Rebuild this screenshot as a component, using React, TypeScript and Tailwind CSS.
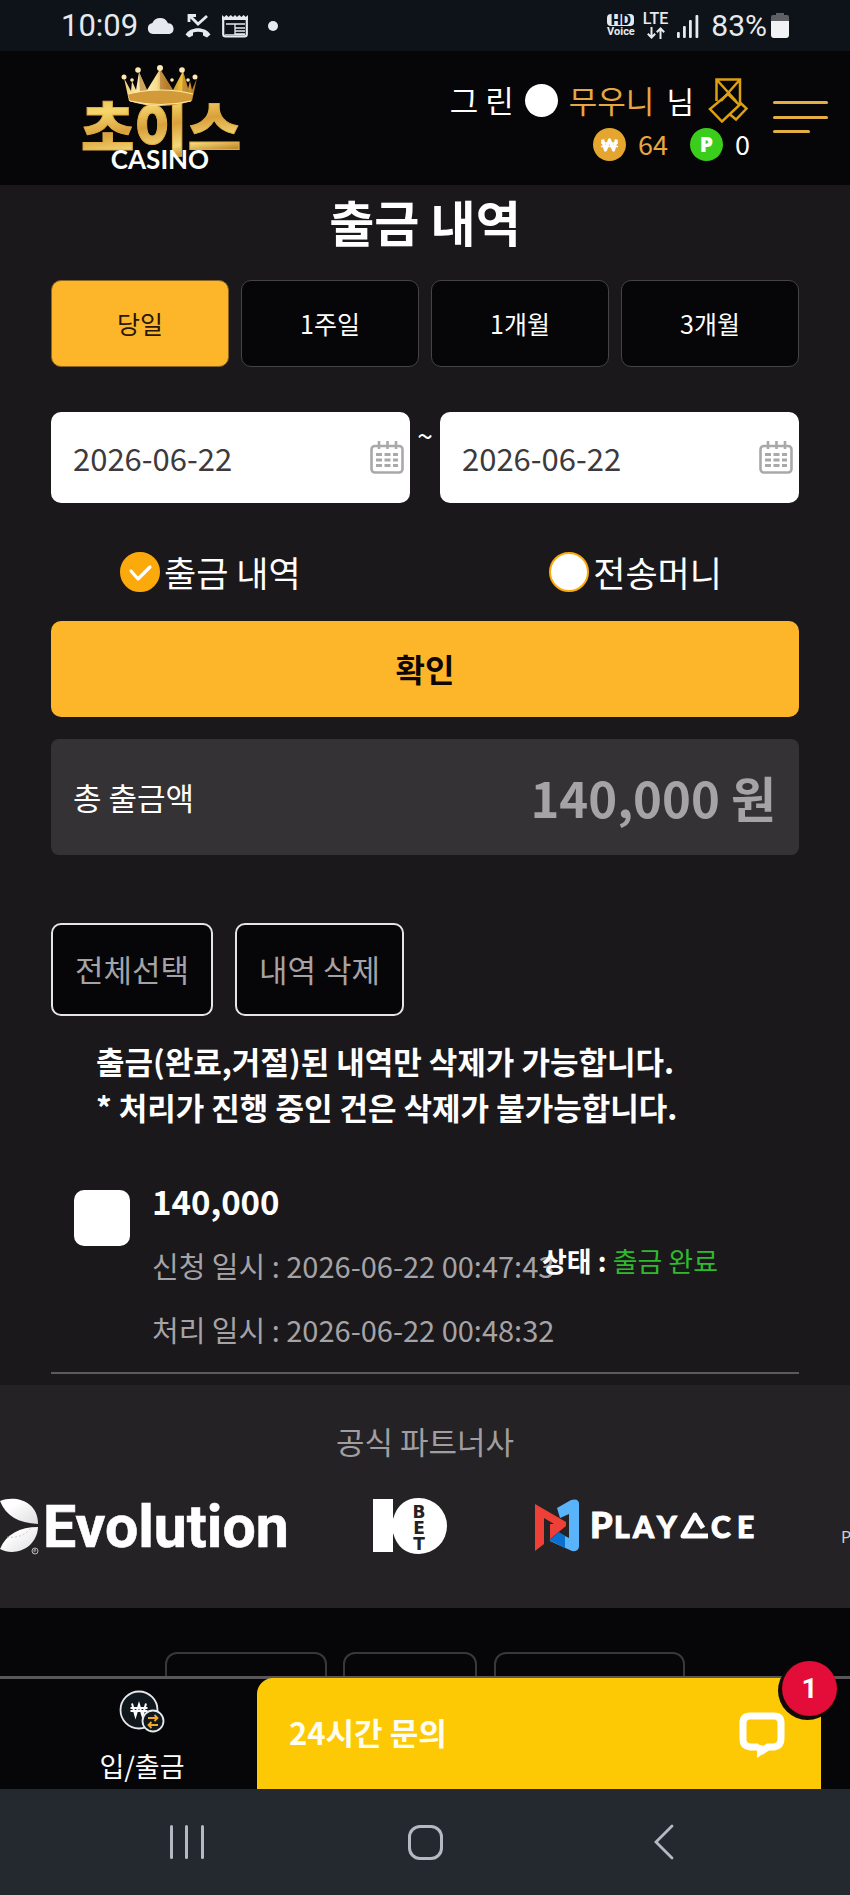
import { useState } from "react";

const PERIODS = ["당일", "1주일", "1개월", "3개월"];

function StatusBar() {
  return (
    <div className="flex h-[51px] items-center justify-between bg-[#0d1319] pr-[61px] pl-[61px] font-[Roboto,sans-serif] text-[#e6eaee]">
      <div className="flex items-center">
        <span className="text-[31px] leading-[50px]">10:09</span>
        <svg className="ml-[9px] h-4 w-7" viewBox="0 0 28 16" fill="currentColor" aria-hidden="true">
          <path d="M6 16a5.500 5.500 0 0 1-.6-10.900A8.500 8.500 0 0 1 21 5.200 5.500 5.500 0 0 1 22.500 16Z" />
        </svg>
        <svg className="ml-[10px] h-6 w-[26px]" viewBox="0 0 26 24" fill="none" stroke="currentColor" aria-hidden="true">
          <path d="M22 2 13 10 5 2M4 8V1.500h7" strokeWidth="2.800" />
          <path d="M.5 20.500C5.500 12 20.500 12 25.500 20.500L22 23.500 18 21.500V18.500C15 17.500 11 17.500 8 18.500V21.500L4 23.500Z" fill="currentColor" stroke="none" />
        </svg>
        <svg className="ml-[11px] h-6 w-[26px]" viewBox="0 0 26 24" fill="none" stroke="currentColor" aria-hidden="true">
          <path d="M0 1 2.200 3 4.400 1 6.600 3 8.800 1 11 3 13 1 15 3 17.200 1 19.400 3 21.600 1 23.800 3 26 1V6H0Z" fill="currentColor" stroke="none" />
          <path d="M1.200 4V20Q1.200 22.500 3.500 22.500H22.500Q24.800 22.500 24.800 20V4" strokeWidth="2.200" />
          <path d="M4 10H23M13 14H23M13 17H23M13 20H23M13 10V21M3 20.800H23" strokeWidth="1.300" />
        </svg>
        <span className="ml-5 size-[10px] rounded-full bg-current" />
      </div>
      <div className="flex items-center">
        <div className="flex flex-col items-center">
          <span className="w-[27px] rounded-[4px] bg-[#e6eaee] text-center text-[15px] leading-3 font-black text-[#0d1319]">HD</span>
          <span className="text-[11px] leading-3 font-bold">Voice</span>
        </div>
        <div className="ml-2 flex flex-col items-center">
          <span className="text-[16px] leading-3 font-medium">LTE</span>
          <svg className="mt-[2px] h-3 w-[18px]" viewBox="0 0 18 12" fill="none" stroke="currentColor" strokeWidth="2" aria-hidden="true">
            <path d="M4.500 0V10.500M.8 6.800 4.500 10.500 8.200 6.800M13.500 12V1.500M9.800 5.200 13.500 1.500 17.200 5.200" />
          </svg>
        </div>
        <svg className="ml-[9px] h-6 w-[22px]" viewBox="0 0 22 24" fill="currentColor" aria-hidden="true">
          <rect x="0" y="18" width="2.800" height="6" rx="1" />
          <rect x="6" y="12" width="2.800" height="12" rx="1" />
          <rect x="12" y="6" width="2.800" height="18" rx="1" />
          <rect x="18.500" y="1" width="2.800" height="23" rx="1" />
        </svg>
        <span className="ml-3 text-[30px] leading-[50px]">83%</span>
        <svg className="ml-1 h-[25px] w-[18px]" viewBox="0 0 18 25" aria-hidden="true">
          <path d="M5 0h8v2h3q2 0 2 2v5H0V4q0-2 2-2h3Z" fill="#5d6165" />
          <path d="M0 8H18V22q0 3-3 3H3q-3 0-3-3Z" fill="#f0f2f4" />
        </svg>
      </div>
    </div>
  );
}

function Logo() {
  return (
    <a href="#home" aria-label="초이스 CASINO">
      <svg className="h-[116px] w-[164px]" viewBox="0 0 164 116" aria-hidden="true">
        <defs>
          <linearGradient id="gold" x1="0" y1="0" x2="0.3" y2="1">
            <stop offset="0" stopColor="#e2a83a" />
            <stop offset="0.35" stopColor="#f6d76c" />
            <stop offset="0.6" stopColor="#d9a03a" />
            <stop offset="0.85" stopColor="#f4d978" />
            <stop offset="1" stopColor="#b97e22" />
          </linearGradient>
          <linearGradient id="crown" x1="0" y1="0" x2="1" y2="0">
            <stop offset="0" stopColor="#f0cf78" />
            <stop offset="0.25" stopColor="#fff0b8" />
            <stop offset="0.45" stopColor="#f7dc8d" />
            <stop offset="0.6" stopColor="#b57a2a" />
            <stop offset="0.8" stopColor="#f3c63e" />
            <stop offset="1" stopColor="#a8671d" />
          </linearGradient>
        </defs>
        <g fontFamily="'Noto Sans CJK KR', sans-serif" fontWeight="900" fontSize="58">
          <text x="82" y="86" textAnchor="middle" fill="url(#gold)" stroke="#e0ac44" strokeWidth="1">초이스</text>
        </g>
        <path d="M50 37 45 14 52 27 53 17 57 26 60 8 68 26 81 5 94 26 104 7 109 25 111 17 113 26 118 14 113 37Q81 47 50 37Z" fill="url(#crown)" />
        <path d="M81 5 94 26 91 36 81 30ZM104 7 110 27 107 35 103 28ZM60 8 68 26 66 34 61 28Z" fill="#b47a2b" opacity="0.65" />
        <path d="M49 30Q82 22 114 30L112 37Q82 45 51 37Z" fill="#d39a3a" />
        <path d="M49 30Q82 22 114 30M51 37Q82 44 112 37" fill="none" stroke="#ffe9a6" strokeWidth="1.200" />
        <g fill="#ffe8b4">
          <circle cx="45" cy="13" r="2.500" />
          <circle cx="53" cy="16" r="1.800" />
          <circle cx="59" cy="6" r="2.800" />
          <circle cx="81" cy="4" r="3" />
          <circle cx="103" cy="6" r="2.800" />
          <circle cx="93" cy="16" r="1.800" />
          <circle cx="109" cy="16" r="1.800" />
          <circle cx="116" cy="13" r="2.500" />
        </g>
        <text x="81" y="105" textAnchor="middle" fill="#fff" fontFamily="Lato, sans-serif" fontWeight="700" fontSize="26">CASINO</text>
      </svg>
    </a>
  );
}

function Header() {
  return (
    <header className="flex h-[134px] justify-between bg-[#060508] pr-[22px] pl-[79px]">
      <div className="pt-[13px]">
        <Logo />
      </div>
      <div className="flex">
        <div className="flex flex-col items-end pt-[27px] text-[30px] leading-[44px] text-white">
          <div className="flex h-11 items-center pr-[2px]">
            <span className="text-[31px]">그 린</span>
            <span className="ml-[11px] size-[33px] rounded-full bg-white" />
            <span className="ml-[11px] text-[31px] text-[#e5a742]">무우니</span>
            <span className="ml-3">님</span>
            <svg className="ml-[14px] h-[46px] w-10" viewBox="0 0 40 46" fill="none" stroke="#dca010" strokeWidth="2.500" aria-hidden="true">
              <path d="M8.500 24V2.500H32V25M8.500 2.500 28 24M32 2.500 13 24" />
              <path d="M20 17 31.500 28 14 44.500 2 32ZM31.500 25 38.500 31.500 28 42.500 21.500 37" />
            </svg>
          </div>
          <div className="flex h-11 items-center text-[27px]">
            <svg className="size-[33px]" viewBox="0 0 33 33" role="img" aria-label="원">
              <circle cx="16.500" cy="16.500" r="16.500" fill="#e5a62f" />
              <path d="M9.500 11.500 12.500 22 16.500 12 20.500 22 23.500 11.500" fill="none" stroke="#fff" strokeWidth="3.200" strokeLinejoin="round" />
              <path d="M8 15H25M8 18.500H25" stroke="#fff" strokeWidth="1.600" />
            </svg>
            <span className="ml-3 text-[#e5a742]">64</span>
            <span className="ml-[22px] flex size-[33px] items-center justify-center rounded-full bg-[#3bcd1c] font-['Noto_Sans',sans-serif] text-[21px] leading-none font-black">P</span>
            <span className="ml-3">0</span>
          </div>
        </div>
        <button type="button" aria-label="메뉴" className="mt-[50px] ml-[23px] flex h-8 flex-col justify-between self-start">
          <span className="h-[3px] w-[55px] rounded-full bg-[#e5ae43]" />
          <span className="h-[3px] w-[55px] rounded-full bg-[#e5ae43]" />
          <span className="h-[3px] w-[37px] rounded-full bg-[#e5ae43]" />
        </button>
      </div>
    </header>
  );
}

function DateField({ label }: { label: string }) {
  const [value, setValue] = useState("2026-06-22");
  return (
    <div className="flex h-[91px] min-w-0 flex-1 items-center rounded-[10px] bg-white pr-[6px] pl-[22px]">
      <input
        type="text"
        aria-label={label}
        value={value}
        onChange={(e) => setValue(e.target.value)}
        className="h-[60px] min-w-0 flex-1 bg-transparent text-[31px] leading-[60px] text-[#3c3a3d] outline-none"
      />
      <button type="button" aria-label="달력 열기" className="pb-[2px]">
        <svg className="h-[34px] w-[34px]" viewBox="0 0 34 34" fill="none" stroke="#aaa8aa" aria-hidden="true">
          <rect x="1.500" y="6" width="31" height="26.500" rx="3.500" strokeWidth="2.600" />
          <path d="M9 1V9M17.500 1V9M26 1V9" strokeWidth="2.600" />
          <path d="M6 14.500H28M6 20H28M6 25.500H28" strokeWidth="2.800" strokeDasharray="6 2.500" />
        </svg>
      </button>
    </div>
  );
}

function KindRadio({ id, label, checked, onSelect }: { id: string; label: string; checked: boolean; onSelect: () => void }) {
  return (
    <label htmlFor={id} className="flex h-10 items-center gap-1 text-[35px] leading-10 text-white">
      <span className="relative flex">
        <input
          id={id}
          type="radio"
          name="kind"
          checked={checked}
          onChange={onSelect}
          className="size-10 appearance-none rounded-full border-2 border-[#fca90b] bg-white checked:bg-[#fca90b]"
        />
        {checked && (
          <svg className="pointer-events-none absolute inset-0 size-10" viewBox="0 0 40 40" fill="none" stroke="#fff" strokeWidth="3.200" strokeLinecap="round" strokeLinejoin="round" aria-hidden="true">
            <path d="M11 19 18 27 30 15" />
          </svg>
        )}
      </span>
      {label}
    </label>
  );
}

function WithdrawHistory() {
  const [period, setPeriod] = useState("당일");
  const [kind, setKind] = useState("withdraw");
  const [picked, setPicked] = useState(false);
  return (
    <main className="px-[51px] pb-[11px]">
      <h1 className="text-center text-[49px] leading-[72px] font-bold text-white">출금 내역</h1>
      <div className="mt-[23px] grid grid-cols-4 gap-3">
        {PERIODS.map((p) => (
          <button
            key={p}
            type="button"
            onClick={() => setPeriod(p)}
            className={
              p === period
                ? "h-[87px] rounded-[10px] border border-[#8a6420] bg-[#fdb629] text-[25px] text-[#2a1608]"
                : "h-[87px] rounded-[10px] border border-[#454346] bg-[#060508] text-[25px] text-white"
            }
          >
            {p}
          </button>
        ))}
      </div>
      <div className="mt-[45px] flex">
        <DateField label="시작일" />
        <span className="w-[30px] text-center text-[28px] leading-[46px] text-white">~</span>
        <DateField label="종료일" />
      </div>
      <div className="mt-[49px] flex justify-between pr-[77px] pl-[69px]">
        <KindRadio id="kind-withdraw" label="출금 내역" checked={kind === "withdraw"} onSelect={() => setKind("withdraw")} />
        <KindRadio id="kind-transfer" label="전송머니" checked={kind === "transfer"} onSelect={() => setKind("transfer")} />
      </div>
      <button type="button" className="mt-[29px] h-24 w-full rounded-[10px] bg-[#fdb629] pb-[2px] text-[32px] font-bold text-[#0d0705]">확인</button>
      <div className="mt-[22px] flex h-[116px] items-center justify-between rounded-[8px] bg-[#353235] pr-[23px] pl-[22px]">
        <span className="text-[31px] text-white">총 출금액</span>
        <strong className="text-[49px] font-bold text-[#a5a3a5]">140,000 원</strong>
      </div>
      <div className="mt-[68px] flex gap-[22px]">
        <button type="button" className="h-[93px] rounded-[10px] border-2 border-[#e6e5e6] bg-[#060508] px-[22px] text-[31px] text-[#a5a3a5]">전체선택</button>
        <button type="button" className="h-[93px] rounded-[10px] border-2 border-[#e6e5e6] bg-[#060508] px-[22px] text-[31px] text-[#a5a3a5]">내역 삭제</button>
      </div>
      <p className="mt-[22px] pl-[45px] text-[31px] leading-[46px] font-bold text-white">
        출금(완료,거절)된 내역만 삭제가 가능합니다.
        <br />* 처리가 진행 중인 건은 삭제가 불가능합니다.
      </p>
      <article className="mt-[39px] flex border-b-2 border-[#5c5a5c] pb-[11px] pl-[23px]">
        <input
          type="checkbox"
          aria-label="140,000 선택"
          checked={picked}
          onChange={(e) => setPicked(e.target.checked)}
          className="mt-[21px] size-14 shrink-0 appearance-none rounded-[10px] bg-white checked:bg-[#fdb629]"
        />
        <div className="ml-[22px] min-w-0 flex-1 text-[29px] leading-[64px] whitespace-nowrap text-[#a5a3a5]">
          <div className="text-[33px] font-bold text-white">140,000</div>
          <div>신청 일시 : 2026-06-22 00:47:43</div>
          <div>처리 일시 : 2026-06-22 00:48:32</div>
        </div>
        <div className="flex w-[257px] shrink-0 items-center pb-[8px] text-[27px] leading-[40px] text-[#2dba2b]">
          <span>
            <b className="text-white">상태 :</b> 출금 완료
          </span>
        </div>
      </article>
    </main>
  );
}

function Partners() {
  return (
    <section className="h-[223px] overflow-hidden bg-[#242225] pt-[32px]">
      <h2 className="text-center text-[31px] leading-[48px] text-[#a09ea0]">공식 파트너사</h2>
      <div className="mt-[31px] flex h-[60px] items-center">
        <svg className="h-[60px] w-[290px] shrink-0" viewBox="0 0 290 60" role="img" aria-label="Evolution">
          <defs>
            <linearGradient id="leaf" x1="0" y1="0" x2="1" y2="1">
              <stop offset="0.3" stopColor="#fff" />
              <stop offset="1" stopColor="#dddcdf" />
            </linearGradient>
          </defs>
          <path d="M0 5C14-1 38 4 38 28 18 27 6 20 0 5Z" fill="url(#leaf)" />
          <path d="M38 31C37 52 15 61 0 53 6 38 20 31 38 31Z" fill="url(#leaf)" />
          <path d="M7 41Q22 43 31 32" fill="none" stroke="#bbb" strokeWidth="0.8" strokeDasharray="2 2" />
          <circle cx="35" cy="55" r="3" fill="none" stroke="#bbb" />
          <path d="M34 56.500V53.500H35.500L36 55H34" fill="none" stroke="#bbb" strokeWidth="0.7" />
          <text x="43" y="51" fill="#fff" stroke="#fff" strokeWidth="0.6" fontFamily="Roboto, sans-serif" fontWeight="700" fontSize="59">Evolution</text>
        </svg>
        <svg className="ml-[82px] h-[60px] w-[76px] shrink-0" viewBox="0 0 76 60" role="img" aria-label="10BET">
          <path d="M1 3H21V23Q27 2 47 2A28 28 0 0 1 47 58Q27 58 21 37V56H1Z" fill="#fff" />
          <g fill="#242225" fontFamily="'DejaVu Sans', sans-serif" fontWeight="700" fontSize="17" textAnchor="middle">
            <text x="47" y="22">B</text>
            <text x="47" y="38">E</text>
            <text x="47" y="54">T</text>
          </g>
        </svg>
        <svg className="ml-[86px] h-[60px] w-[224px] shrink-0" viewBox="0 0 224 60" role="img" aria-label="PlayAce">
          <path d="M23 12 37 4Q45 2 45 8V50Q45 56 38 55L16 45 25 37 35 42V18L26 22Z" fill="#5ab4fb" />
          <path d="M15 44 25 36 31 40V52Z" fill="#0b6fd0" />
          <path d="M1 8 32 26V30L16 43V28H20L10 22V48L1 55Z" fill="#ee4037" />
          <g fill="#fff" stroke="#fff" strokeWidth="1" fontFamily="Lato, sans-serif" fontWeight="900">
            <text x="56" y="42" fontSize="36">P</text>
            <text x="80" y="42" fontSize="30">L</text>
            <text x="99" y="42" fontSize="30">A</text>
            <text x="123" y="42" fontSize="30">Y</text>
            <text x="177" y="42" fontSize="30">C</text>
            <text x="203" y="42" fontSize="30">E</text>
          </g>
          <path d="M174 40H149L161 19 169 32" fill="none" stroke="#fff" strokeWidth="5" strokeLinejoin="round" />
        </svg>
        <span className="ml-[83px] pt-5 text-[16px] leading-5 text-[#d0ced0]">P</span>
      </div>
    </section>
  );
}

function BottomBar() {
  return (
    <nav className="flex h-[113px] border-t-[3px] border-[#59575a] bg-[#060508]">
      <a href="#cash" className="flex w-[257px] shrink-0 flex-col items-center pt-[11px] pl-[27px] text-[27px] leading-[36px] text-white">
        <svg className="h-[44px] w-[46px]" viewBox="0 0 46 44" fill="none" aria-hidden="true">
          <circle cx="20" cy="20" r="18.500" fill="#10181d" stroke="#e6eaee" strokeWidth="1.800" />
          <path d="M13 13.500 16.500 26 20 14.500 23.500 26 27 13.500M11.500 18H28.500M11.500 21H28.500" stroke="#fff" strokeWidth="2" />
          <circle cx="34" cy="31" r="10.500" fill="#10181d" stroke="#e6eaee" strokeWidth="1.800" />
          <path d="M29 28H38M35.500 25 38.500 28 35.500 31M39 35H30M32.500 32 29.500 35 32.500 38" stroke="#f0a92c" strokeWidth="1.800" />
        </svg>
        <span className="mt-[14px]">입/출금</span>
      </a>
      <button type="button" className="relative mr-[29px] -mt-px flex flex-1 items-center justify-between rounded-tl-[16px] bg-[#fdc904] pr-[35px] pb-[2px] pl-8 text-[31px] font-bold text-[#fffdf0]">
        <span>24시간 문의</span>
        <svg className="mt-1 h-[48px] w-[48px]" viewBox="0 0 48 48" fill="none" aria-hidden="true">
          <path d="M20 36H12Q5 35 5 29V12Q5 5 12 5H36Q43 5 43 12V28Q43 35 36 36H30L22 41" stroke="#fff" strokeWidth="7" />
          <path d="M19 33V47L33 37Z" fill="#fff" />
        </svg>
        <span className="absolute -top-[17px] -right-[16px] flex size-[55px] items-center justify-center rounded-full bg-[#e40c38] font-[Roboto,sans-serif] text-[28px] font-bold text-white shadow-[-2px_2px_0_2px_#120c05]">1</span>
      </button>
    </nav>
  );
}

function SystemNav() {
  return (
    <div className="grid h-[106px] grid-cols-[1fr_104px_1fr] items-center bg-[#242930] text-[#b4bac2]">
      <button type="button" aria-label="최근 앱" className="flex h-[34px] w-[34px] justify-between justify-self-center">
        <span className="w-[3px] rounded-full bg-current" />
        <span className="w-[3px] rounded-full bg-current" />
        <span className="w-[3px] rounded-full bg-current" />
      </button>
      <button type="button" aria-label="홈" className="size-[35px] justify-self-center rounded-[12px] border-[3px] border-current" />
      <button type="button" aria-label="뒤로" className="justify-self-center">
        <svg className="h-9 w-[20px]" viewBox="0 0 20 36" fill="none" stroke="currentColor" strokeWidth="2.800" strokeLinecap="round" aria-hidden="true">
          <path d="M18 2 2 18 18 34" />
        </svg>
      </button>
    </div>
  );
}

export default function App() {
  return (
    <div className="w-full overflow-hidden bg-[#1a181b] font-['Noto_Sans_CJK_KR',sans-serif]">
      <StatusBar />
      <Header />
      <WithdrawHistory />
      <Partners />
      <div className="flex h-[68px] items-start justify-center overflow-hidden bg-[#060508] pt-11">
        <div className="h-20 w-[162px] shrink-0 rounded-[12px] border-2 border-[#39373a]" />
        <div className="ml-4 h-20 w-[134px] shrink-0 rounded-[12px] border-2 border-[#39373a]" />
        <div className="ml-[17px] h-20 w-[191px] shrink-0 rounded-[12px] border-2 border-[#39373a]" />
      </div>
      <BottomBar />
      <SystemNav />
    </div>
  );
}
